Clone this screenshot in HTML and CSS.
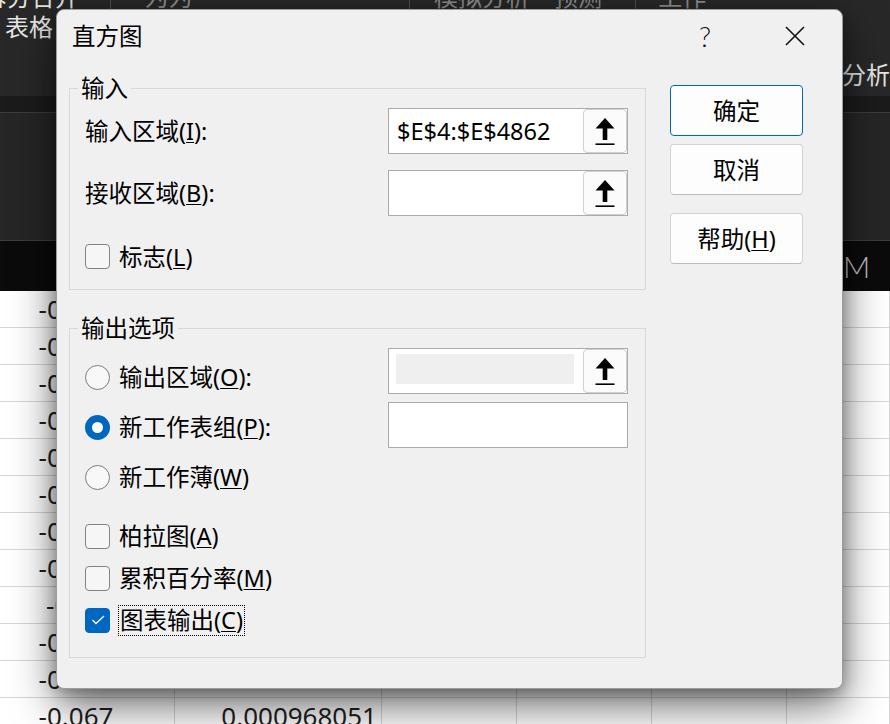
FILE: index.html
```html
<!DOCTYPE html>
<html lang="zh-CN">
<head>
  <meta charset="UTF-8" />
  <title>直方图</title>
  <link rel="stylesheet" href="styles.css">
</head>
<body>

<!-- Excel behind the dialog -->
<div class="excel">
  <div class="ribbon">
    <div class="rb-group g1">
      <span class="rb-cut">拆分合并</span>
      <span class="rb-label">表格</span>
    </div>
    <div class="rb-group g2"><span class="rb-cut dim">为为</span></div>
    <div class="rb-group g3"><span class="rb-cut dim">模拟分析　预测</span></div>
    <div class="rb-group g4"><span class="rb-cut dim">工作</span></div>
    <div class="rb-group g5"><span class="rb-label">分析</span></div>
  </div>
  <div class="ribbon-foot"></div>
  <div class="formula-area"></div>
  <div class="col-heads">
    <span></span><span></span><span></span><span></span><span></span>
    <span class="col-name">M</span>
  </div>
  <div class="sheet">
    <div class="row"><span>-0.099</span><span></span><span></span><span></span><span></span><span></span></div>
    <div class="row"><span>-0.097</span><span></span><span></span><span></span><span></span><span></span></div>
    <div class="row"><span>-0.095</span><span></span><span></span><span></span><span></span><span></span></div>
    <div class="row"><span>-0.093</span><span></span><span></span><span></span><span></span><span></span></div>
    <div class="row"><span>-0.091</span><span></span><span></span><span></span><span></span><span></span></div>
    <div class="row"><span>-0.089</span><span></span><span></span><span></span><span></span><span></span></div>
    <div class="row"><span>-0.087</span><span></span><span></span><span></span><span></span><span></span></div>
    <div class="row"><span>-0.085</span><span></span><span></span><span></span><span></span><span></span></div>
    <div class="row"><span>-0.08</span><span></span><span></span><span></span><span></span><span></span></div>
    <div class="row"><span>-0.071</span><span></span><span></span><span></span><span></span><span></span></div>
    <div class="row"><span>-0.069</span><span class="num">0.000712017</span><span></span><span></span><span></span><span></span></div>
    <div class="row"><span>-0.067</span><span class="num">0.000968051</span><span></span><span></span><span></span><span></span></div>
  </div>
</div>

<!-- Histogram dialog -->
<div class="dialog">
  <div class="titlebar">
    <span class="title">直方图</span>
    <span class="tb-btn help">?</span>
    <span class="tb-btn close">
      <svg width="20" height="20" viewBox="0 0 20 20"><path d="M1 1 L19 19 M19 1 L1 19" stroke="#111" stroke-width="1.6" fill="none"/></svg>
    </span>
  </div>

  <div class="dlg-body">
    <div class="dlg-main">

      <fieldset class="group">
        <legend>输入</legend>
        <div class="field-row">
          <span class="lbl">输入区域(<u>I</u>):</span>
          <div class="ref-input">
            <span class="value">$E$4:$E$4862</span>
            <span class="ref-btn">
              <svg width="42" height="42" viewBox="0 0 42 42"><path d="M21 8 L30.5 18.5 L23.3 18.5 L23.3 30 L18.7 30 L18.7 18.5 L11.5 18.5 Z" fill="#000"/><rect x="11.5" y="33.4" width="19" height="1.6" fill="#000"/></svg>
            </span>
          </div>
        </div>
        <div class="field-row">
          <span class="lbl">接收区域(<u>B</u>):</span>
          <div class="ref-input">
            <span class="value"></span>
            <span class="ref-btn">
              <svg width="42" height="42" viewBox="0 0 42 42"><path d="M21 8 L30.5 18.5 L23.3 18.5 L23.3 30 L18.7 30 L18.7 18.5 L11.5 18.5 Z" fill="#000"/><rect x="11.5" y="33.4" width="19" height="1.6" fill="#000"/></svg>
            </span>
          </div>
        </div>
        <div class="opt flag-row">
          <span class="check"></span>
          <span class="opt-label">标志(<u>L</u>)</span>
        </div>
      </fieldset>

      <fieldset class="group out">
        <legend>输出选项</legend>
        <div class="out-grid">
          <div class="opts">
            <div class="opt radio-row"><span class="radio"></span><span class="opt-label">输出区域(<u>O</u>):</span></div>
            <div class="opt radio-row"><span class="radio on"></span><span class="opt-label">新工作表组(<u>P</u>):</span></div>
            <div class="opt radio-row"><span class="radio"></span><span class="opt-label">新工作薄(<u>W</u>)</span></div>
            <div class="opt check-row first"><span class="check"></span><span class="opt-label">柏拉图(<u>A</u>)</span></div>
            <div class="opt check-row"><span class="check"></span><span class="opt-label">累积百分率(<u>M</u>)</span></div>
            <div class="opt check-row">
              <span class="check on">
                <svg width="22" height="22" viewBox="0 0 22 22"><path d="M5.5 11 L9 14.5 L17 7" stroke="#fff" stroke-width="1.3" fill="none"/></svg>
              </span>
              <span class="opt-label focus">图表输出(<u>C</u>)</span>
            </div>
          </div>
          <div class="fields">
            <div class="ref-input disabled">
              <span class="value"><span class="fill"></span></span>
              <span class="ref-btn">
                <svg width="42" height="42" viewBox="0 0 42 42"><path d="M21 8 L30.5 18.5 L23.3 18.5 L23.3 30 L18.7 30 L18.7 18.5 L11.5 18.5 Z" fill="#000"/><rect x="11.5" y="33.4" width="19" height="1.6" fill="#000"/></svg>
              </span>
            </div>
            <div class="ref-input"><span class="value"></span></div>
          </div>
        </div>
      </fieldset>

    </div>

    <div class="dlg-buttons">
      <button class="btn default">确定</button>
      <button class="btn">取消</button>
      <button class="btn help-btn">帮助(<u>H</u>)</button>
    </div>
  </div>
</div>

</body>
</html>
```

FILE: styles.css
```css
* {
  box-sizing: border-box;
}

html, body {
  margin: 0;
  padding: 0;
}

body {
  width: 890px;
  height: 724px;
  overflow: hidden;
  position: relative;
  background: #fff;
  font-family: "Noto Sans", "Noto Sans CJK SC", sans-serif;
  color: #000;
}

/* ---------- excel background ---------- */

.ribbon {
  display: flex;
  height: 96px;
  background: #282828;
  overflow: hidden;
  font-size: 24px;
  line-height: 30px;
}

.rb-group {
  display: flex;
  flex-direction: column;
  border-left: 1px solid #4e4e4e;
}

.g1 { width: 110px; border-left: none; padding-left: 5px; }
.g2 { width: 300px; padding-left: 34px; }
.g3 { width: 227px; padding-left: 24px; }
.g4 { width: 133px; padding-left: 22px; }
.g5 { flex: 1; padding-left: 74px; padding-top: 60px; border-left: none; }

.rb-cut {
  margin-top: -18px;
  white-space: nowrap;
  color: #e4e4e4;
}

.g1 .rb-cut {
  margin-left: -22px;
}

.rb-cut.dim {
  color: #8c8c8c;
}

.rb-label {
  color: #e6e6e6;
  white-space: nowrap;
}

.ribbon-foot {
  height: 17px;
  background: #1b1b1b;
  border-bottom: 1px solid #3c3c3c;
}

.formula-area {
  height: 128px;
  background: #262626;
  border-bottom: 1px solid #3e3e3e;
}

.col-heads,
.row {
  display: grid;
  grid-template-columns: 175px 207px 135px 135px 135px 1fr;
}

.col-heads {
  height: 50px;
  background: #0b0b0b;
}

.col-name {
  padding-left: 56px;
  font-family: Lato, "Noto Sans", sans-serif;
  font-weight: 300;
  font-size: 30px;
  line-height: 50px;
  color: #c4c4c4;
}

.row {
  height: 37px;
  border-bottom: 1px solid #d6d6d6;
  font-size: 26px;
  line-height: 36px;
  color: #1f1f1f;
}

.row span {
  border-right: 1px solid #d6d6d6;
  white-space: nowrap;
}

.row span:first-child {
  text-align: center;
  padding-right: 22px;
}

.row .num {
  text-align: right;
  padding-right: 4px;
}

/* ---------- dialog ---------- */

.dialog {
  position: absolute;
  left: 56px;
  top: 9px;
  width: 787px;
  height: 680px;
  background: #f0f0f0;
  border: 1px solid #9c9c9c;
  border-radius: 8px;
  box-shadow: 0 16px 44px rgba(0, 0, 0, 0.6), 0 4px 14px rgba(0, 0, 0, 0.25);
  font-size: 23.5px;
  line-height: 30px;
}

.titlebar {
  display: flex;
  align-items: center;
  height: 52px;
  padding: 0 2px 0 15px;
}

.title {
  flex: 1;
}

.tb-btn {
  width: 90px;
  height: 52px;
  display: flex;
  align-items: center;
  justify-content: center;
}

.help {
  font-family: Lato, "Noto Sans", sans-serif;
  font-weight: 300;
  font-size: 28px;
  color: #111;
}

.dlg-body {
  display: flex;
  padding-left: 12px;
}

.dlg-main {
  width: 577px;
}

.group {
  margin: 13px 0 0;
  padding: 7px 17px 20px 15px;
  border: 1px solid #d8d8d8;
  min-width: 0;
}

.group legend {
  font-size: 23.5px;
  line-height: 26px;
  padding: 0 3px;
  margin-left: -7px;
}

.group.out {
  margin-top: 25px;
  padding-bottom: 16px;
}

.field-row {
  display: flex;
  align-items: center;
  justify-content: space-between;
  height: 46px;
}

.field-row + .field-row {
  margin-top: 16px;
}

.lbl {
  white-space: nowrap;
}

u {
  text-underline-offset: 2px;
  text-decoration-thickness: 1px;
}

.ref-input {
  display: flex;
  width: 240px;
  height: 46px;
  border: 1px solid #ababab;
  background: #fff;
}

.value {
  flex: 1;
  padding-left: 8px;
  line-height: 44px;
  white-space: nowrap;
}

.ref-btn {
  width: 44px;
  border: 1px solid #d0d0d0;
  border-radius: 4px;
  background: #fbfbfb;
  display: flex;
  align-items: center;
  justify-content: center;
}

.disabled .value {
  padding: 5px 9px 0 7px;
}

.fill {
  display: block;
  height: 30px;
  background: #efefef;
}

.opt {
  display: flex;
  align-items: center;
}

.flag-row {
  margin-top: 28px;
  height: 25px;
}

.out-grid {
  display: flex;
  justify-content: space-between;
  align-items: flex-start;
}

.opts {
  display: flex;
  flex-direction: column;
  padding-top: 4px;
}

.radio-row {
  height: 50px;
}

.check-row {
  height: 42px;
}

.check-row.first {
  margin-top: 13px;
}

.fields {
  display: flex;
  flex-direction: column;
  gap: 8px;
}

.radio {
  flex: none;
  width: 25px;
  height: 25px;
  border-radius: 50%;
  border: 1.5px solid #7d7d7d;
  background: #f8f8f8;
}

.radio.on {
  border: none;
  background: #0067c0;
  display: flex;
  align-items: center;
  justify-content: center;
}

.radio.on::after {
  content: "";
  width: 11px;
  height: 11px;
  border-radius: 50%;
  background: #fff;
}

.check {
  flex: none;
  width: 25px;
  height: 25px;
  border: 1.5px solid #838383;
  border-radius: 4px;
  background: #f6f6f6;
}

.check.on {
  border-color: #0067c0;
  background: #0067c0;
  display: flex;
  align-items: center;
  justify-content: center;
}

.opt-label {
  margin-left: 9px;
  white-space: nowrap;
}

.opt-label.focus {
  margin-left: 8px;
  padding: 0 1px;
  border: 1px dotted #000;
  line-height: 29px;
}

.dlg-buttons {
  display: flex;
  flex-direction: column;
  width: 133px;
  margin-left: 24px;
  padding-top: 23px;
}

.btn {
  height: 51px;
  border: 1px solid #d2d2d2;
  border-bottom-color: #bdbdbd;
  border-radius: 4px;
  background: #fdfdfd;
  font: inherit;
  color: #000;
  padding: 0;
}

.btn.default {
  border-color: #0067c0;
}

.btn + .btn {
  margin-top: 8px;
}

.btn.help-btn {
  margin-top: 18px;
}
```
